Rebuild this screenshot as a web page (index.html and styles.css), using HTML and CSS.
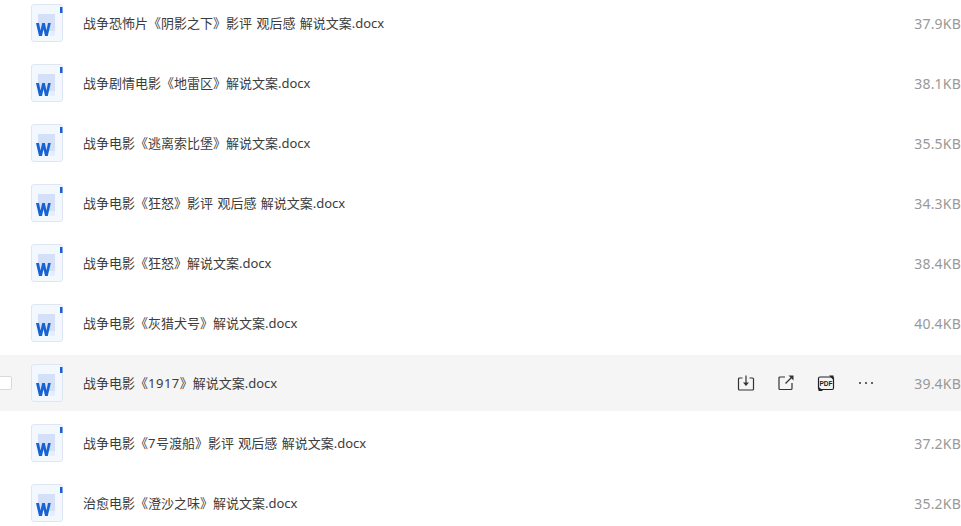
FILE: index.html
```html
<!DOCTYPE html>
<html lang="zh-CN">
<head>
  <meta charset="UTF-8" />
  <title>文件列表</title>
  <link rel="stylesheet" href="styles.css">
</head>
<body>
  <svg class="defs" width="0" height="0">
    <symbol id="word" viewBox="0 0 32 38">
      <rect x="0.5" y="0.5" width="31" height="37" rx="2.5" fill="#f3f7fe" stroke="#dfe6f3"/>
      <rect x="29" y="3" width="2.5" height="6" fill="#1a5fd0"/>
      <rect x="7" y="10" width="17" height="17" fill="#d3e0f8"/>
      <rect x="19" y="27" width="5" height="5" fill="#e6eefb"/>
      <path d="M5 19h3l1.500 7.500L11.200 19h2.600l1.700 7.500L17 19h2.800l-3 13h-2.800l-1.500-7-1.500 7H8z" fill="#1763d4"/>
    </symbol>
  </svg>

  <div class="list">
    <div class="row">
      <svg class="file-icon"><use href="#word"/></svg>
      <span class="name">战争恐怖片《阴影之下》影评 观后感 解说文案.docx</span>
      <span class="size">37.9KB</span>
    </div>
    <div class="row">
      <svg class="file-icon"><use href="#word"/></svg>
      <span class="name">战争剧情电影《地雷区》解说文案.docx</span>
      <span class="size">38.1KB</span>
    </div>
    <div class="row">
      <svg class="file-icon"><use href="#word"/></svg>
      <span class="name">战争电影《逃离索比堡》解说文案.docx</span>
      <span class="size">35.5KB</span>
    </div>
    <div class="row">
      <svg class="file-icon"><use href="#word"/></svg>
      <span class="name">战争电影《狂怒》影评 观后感 解说文案.docx</span>
      <span class="size">34.3KB</span>
    </div>
    <div class="row">
      <svg class="file-icon"><use href="#word"/></svg>
      <span class="name">战争电影《狂怒》解说文案.docx</span>
      <span class="size">38.4KB</span>
    </div>
    <div class="row">
      <svg class="file-icon"><use href="#word"/></svg>
      <span class="name">战争电影《灰猎犬号》解说文案.docx</span>
      <span class="size">40.4KB</span>
    </div>
    <div class="row active">
      <span class="check"></span>
      <svg class="file-icon"><use href="#word"/></svg>
      <span class="name">战争电影《<span class="num">1917</span>》解说文案.docx</span>
      <div class="actions">
        <svg viewBox="0 0 18 18" fill="none" stroke="#333" stroke-width="1.2">
          <path d="M5.500 4H2.500a1 1 0 0 0-1 1v10a1 1 0 0 0 1 1h13a1 1 0 0 0 1-1V5a1 1 0 0 0-1-1h-3"/>
          <path d="M9 1.500v8"/>
          <path d="M6 8.500h6L9 12z" fill="#333" stroke="none"/>
        </svg>
        <svg viewBox="0 0 18 18" fill="none" stroke="#333" stroke-width="1.2">
          <path d="M8 3H3a1 1 0 0 0-1 1v10.500a1 1 0 0 0 1 1h11a1 1 0 0 0 1-1V9"/>
          <path d="M8.500 9.500 15 3"/>
          <path d="M11.500 1.500h5v5z" fill="#333" stroke="none"/>
        </svg>
        <svg viewBox="0 0 18 18" fill="none" stroke="#222" stroke-width="1.200">
          <rect x="1.500" y="3" width="15" height="12.500" rx="1.500"/>
          <path d="M12 1.500l4.500 0 0 4.500zM6 17l-4.500 0 0-4.500z" fill="#222" stroke="none"/>
          <text x="9" y="11.500" class="pdf-label">PDF</text>
        </svg>
        <svg viewBox="0 0 18 18" fill="#333">
          <circle cx="3" cy="9" r="1"/>
          <circle cx="9" cy="9" r="1"/>
          <circle cx="15" cy="9" r="1"/>
        </svg>
      </div>
      <span class="size">39.4KB</span>
    </div>
    <div class="row">
      <svg class="file-icon"><use href="#word"/></svg>
      <span class="name">战争电影《<span class="num">7</span>号渡船》影评 观后感 解说文案.docx</span>
      <span class="size">37.2KB</span>
    </div>
    <div class="row">
      <svg class="file-icon"><use href="#word"/></svg>
      <span class="name">治愈电影《澄沙之味》解说文案.docx</span>
      <span class="size">35.2KB</span>
    </div>
  </div>
</body>
</html>
```

FILE: styles.css
```css
html, body {
  height: 100%;
  overflow: hidden;
}
body {
  margin: 0;
  background: #fff;
  font-family: "Noto Sans", "Noto Sans CJK SC", sans-serif;
}
.defs {
  display: block;
}
.list {
  display: flex;
  flex-direction: column;
  gap: 4px;
  margin-top: -5px;
}
.row {
  position: relative;
  display: flex;
  align-items: center;
  height: 56px;
  flex-shrink: 0;
  padding-left: 31px;
}
.row.active {
  background: #f5f5f5;
}
.check {
  position: absolute;
  left: -2px;
  top: 21px;
  width: 12px;
  height: 12px;
  background: #fff;
  border: 1px solid #d9d9d9;
  border-radius: 2px;
}
.file-icon {
  width: 32px;
  height: 38px;
  flex-shrink: 0;
}
.name {
  margin-left: 20px;
  font-size: 13px;
  line-height: 18px;
  color: #3c3c3c;
  word-spacing: 1px;
  white-space: nowrap;
}
.num {
  letter-spacing: 0.5px;
}
.actions {
  display: flex;
  align-items: center;
  gap: 22px;
  margin-left: auto;
}
.actions svg {
  width: 18px;
  height: 18px;
}
.pdf-label {
  font-family: "Liberation Sans", sans-serif;
  font-size: 6.500px;
  font-weight: 700;
  fill: #222;
  stroke: none;
  text-anchor: middle;
}
.size {
  width: 47px;
  margin-left: 39px;
  font-size: 14px;
  letter-spacing: 0.2px;
  color: #999;
  text-align: right;
  white-space: nowrap;
}
.row > .name + .size {
  margin-left: auto;
}
```
